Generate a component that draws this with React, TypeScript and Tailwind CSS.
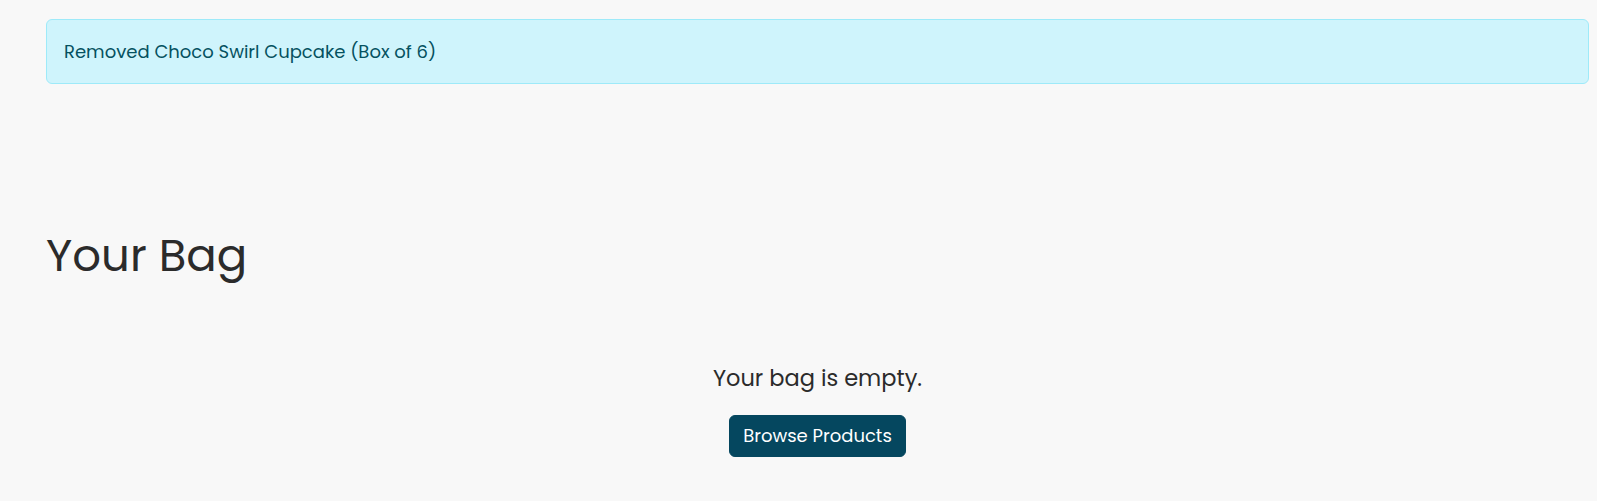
import React from "react";

export default function App() {
  return (
    <div
      className="min-h-[501px] w-full bg-[#f8f8f8] text-[#212529]"
      style={{ fontFamily: '"Poppins", "Open Sans", sans-serif' }}
    >
      <div className="ml-[46px] mr-[8px] pt-[19px]">
        <div className="rounded-[6px] border border-[#9eeaf9] bg-[#cff4fc] px-[17px] py-[18px] text-[18px] leading-[27px] text-[#055160]">
          Removed Choco Swirl Cupcake (Box of 6)
        </div>
        <h1 className="mt-[145px] text-[45px] font-normal leading-[54px] text-[#2b2b2b]">
          Your Bag
        </h1>
        <div className="mt-[79px] flex flex-col items-center">
          <p className="text-[22.5px] leading-[33.75px] text-[#2b2b2b]">Your bag is empty.</p>
          <button className="mt-[19px] rounded-[6px] border border-[#05475f] bg-[#05475f] px-[13.5px] py-[6.5px] text-[18px] leading-[27px] text-white">
            Browse Products
          </button>
        </div>
      </div>
    </div>
  );
}
